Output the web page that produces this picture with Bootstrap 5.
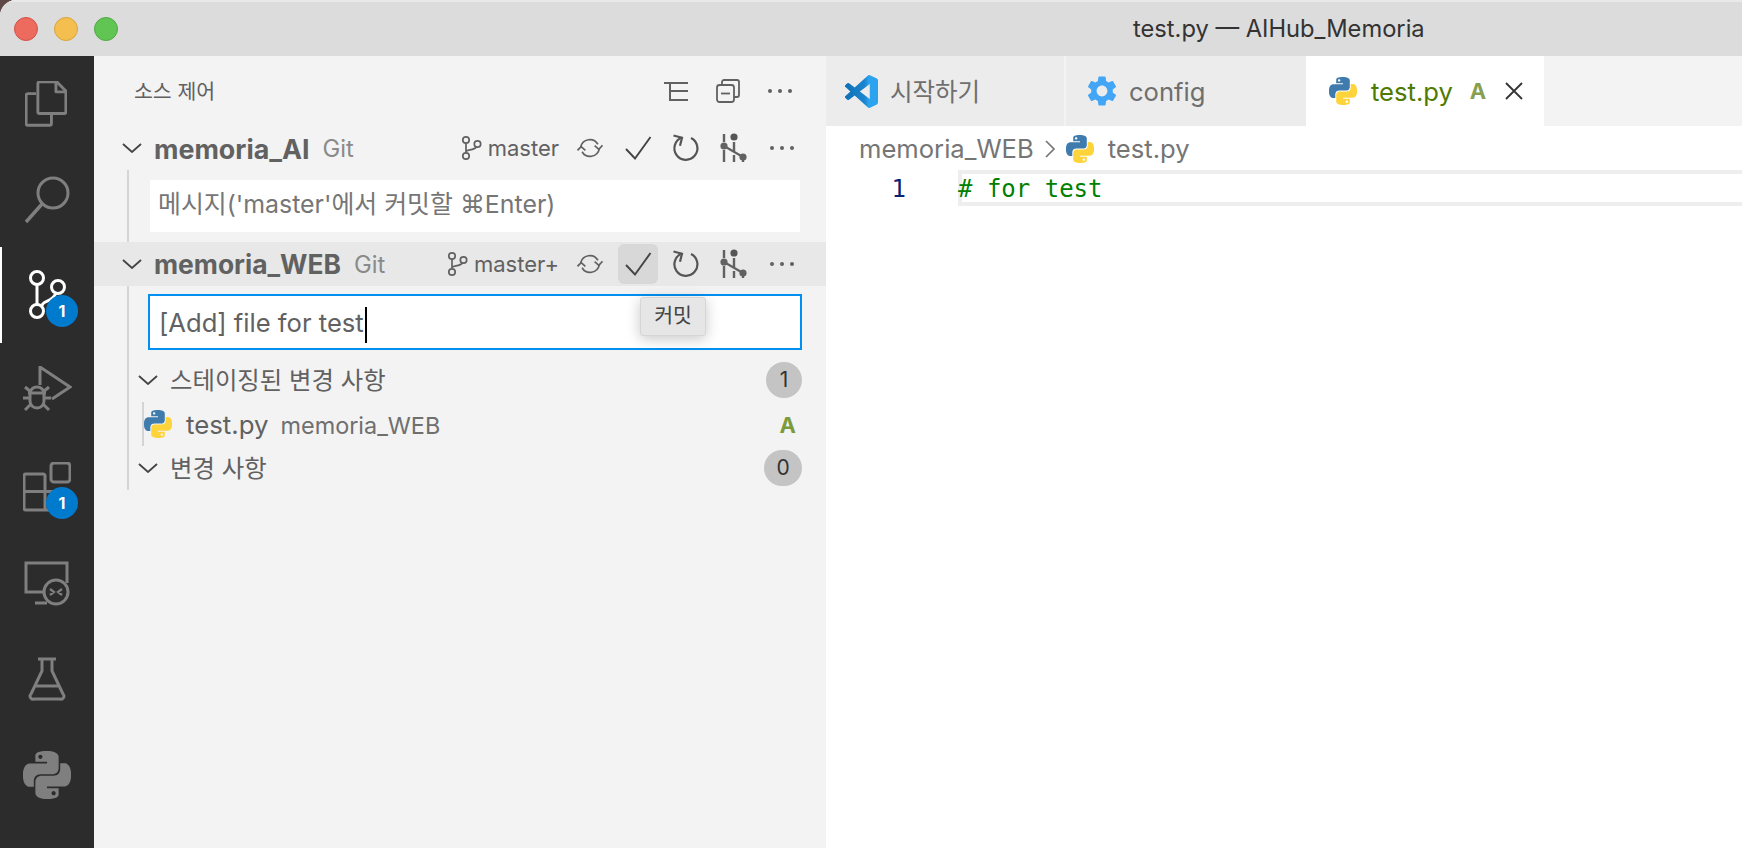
<!DOCTYPE html>
<html lang="ko">
<head>
<meta charset="utf-8">
<title>test.py — AIHub_Memoria</title>
<link href="https://cdn.jsdelivr.net/npm/bootstrap@5.3.0/dist/css/bootstrap.min.css" rel="stylesheet">
<style>
html,body{height:100%;margin:0;overflow:hidden;background:#5e4848;}
body{font-family:"Inter","Noto Sans CJK KR",sans-serif;color:#616161;}
.app-shell{width:1742px;height:848px;background:#fff;border-top-left-radius:16px;overflow:hidden;}
.title-bar{height:56px;background:#dcdcdc;border-top:2px solid #e9e9e9;}
.lights{padding-left:14px;gap:16px;}
.light{width:24px;height:24px;border-radius:50%;border:1px solid;}
.light-r{background:#ec6a5e;border-color:#d2544a;}
.light-y{background:#f4bf4f;border-color:#d9a33f;}
.light-g{background:#61c554;border-color:#50a945;}
.title-text{margin-left:1015px;font-size:23.7px;color:#333;line-height:1;}
.main-area{height:792px;}
.activity{width:94px;background:#2c2c2c;}
.act-item{height:96px;width:94px;border-left:2px solid transparent;}
.act-item svg{margin-left:-2px;}
.act-item.is-on{border-left-color:#fff;}
.act-search{height:95px;}
.act-files svg{margin-left:-4px;}
.act-badge{position:absolute;left:44px;top:48px;width:32px;height:32px;border-radius:50%;background:#007acc;color:#fff;font-size:16px;font-weight:700;}
.side-panel{width:732px;background:#f3f3f3;}
.side-head{height:70px;padding-left:40px;padding-right:20px;}
.side-title{font-size:20.5px;color:#616161;margin-top:2px;}
.head-cell{width:52px;height:40px;}
.repo-row{height:44px;padding-left:28px;padding-right:24px;}
.repo-row.is-hover{background:#e8e8e8;}
.repo-name{font-size:26.8px;font-weight:700;color:#616161;margin-left:12px;margin-top:2px;}
.name-web{font-size:26.4px;}
.repo-git{font-size:23.8px;color:#8a8a8a;margin-left:13px;margin-top:2px;}
.branch-txt{font-size:22px;color:#616161;margin-left:6px;}
.tool-cells{gap:8px;margin-left:11px;}
.tool-cell{width:40px;height:40px;border-radius:6px;}
.tool-cell.is-hover{background:#d8d8d8;}
.repo-body{margin-left:33px;border-left:2px solid #d4d4d4;}
.body-a{height:72px;padding-top:10px;}
.body-b{height:204px;padding-top:8px;}
.commit-a{margin-left:21px;width:650px;height:52px;padding:0 8px;font-size:24.9px;color:#767676;background:#fff;line-height:48px;}
.commit-b{margin-left:19px;width:654px;height:56px;border:2px solid #0090f1;padding:1px 9px 0;font-size:25.6px;color:#616161;background:#fff;line-height:52px;}
.text-caret{display:inline-block;width:2px;height:36px;background:#000;vertical-align:middle;margin-left:1px;}
.group-row{height:44px;padding-left:9px;padding-right:24px;}
.group-first{margin-top:8px;}
.group-txt{font-size:24.4px;color:#616161;margin-left:12px;}
.count-pill{min-width:36px;height:36px;border-radius:18px;background:#c4c4c4;color:#333;font-size:21px;}
.pill-wide{min-width:38px;}
.file-row{height:44px;margin-left:13px;border-left:2px solid #d4d4d4;padding-right:30px;}
.file-name{font-size:25.8px;color:#616161;margin-left:14px;margin-top:3px;}
.file-dir{font-size:23.4px;color:#6f6f6f;margin-left:12px;margin-top:3px;}
.file-flag{font-size:22px;font-weight:700;color:#7c9b3b;margin-top:3px;}
.tip-box{position:absolute;left:22px;top:53px;width:66px;height:39px;background:#e6e6e6;border:1px solid #d6d6d6;border-radius:3px;box-shadow:0 3px 14px rgba(0,0,0,.22);font-size:20.5px;color:#444;z-index:5;}
.editor-pane{width:916px;background:#fff;}
.tab-strip{height:70px;background:#f3f3f3;}
.ed-tab{width:238px;background:#ececec;padding-left:19px;font-size:25.6px;color:#6f6f6f;}
.tab-cfg{width:240px;margin-left:2px;padding-left:21px;}
.tab-on{background:#fff;width:238px;padding-left:23px;color:#4f7a00;}
.tab-text{margin-left:12px;margin-top:2px;}
.tab-ko{font-size:24.5px;}
.tab-on .tab-text{margin-left:14px;}
.tab-flag{font-size:22px;font-weight:700;color:#87a050;margin-left:17px;}
.tab-close{margin-left:19px;}
.crumb-row{height:44px;padding-left:33px;padding-top:2px;font-size:25.6px;color:#757575;}
.crumb-sep{margin-left:10px;margin-right:10px;}
.crumb-file{margin-left:14px;}
.code-row{height:36px;}
.line-no{width:132px;padding-right:52px;text-align:right;color:#0b216f;font-family:"DejaVu Sans Mono",monospace;font-size:24px;line-height:39px;}
.code-line{border:4px solid #eee;border-right:0;line-height:31px;height:36px;color:#008000;font-family:"DejaVu Sans Mono",monospace;font-size:24px;white-space:pre;}
.code-line span{margin-left:-4px;}
</style>
</head>
<body>
<svg class="d-none" xmlns="http://www.w3.org/2000/svg">
  <symbol id="py-gray" viewBox="0 0 24 24"><path fill="#7f7f7f" d="M14.25.18l.9.2.73.26.59.3.45.32.34.34.25.34.16.33.1.3.04.26.02.2-.01.13V8.5l-.05.63-.13.55-.21.46-.26.38-.3.31-.33.25-.35.19-.35.14-.33.1-.3.07-.26.04-.21.02H8.77l-.69.05-.59.14-.5.22-.41.27-.33.32-.27.35-.2.36-.15.37-.1.35-.07.32-.04.27-.02.21v3.06H3.17l-.21-.03-.28-.07-.32-.12-.35-.18-.36-.26-.36-.36-.35-.46-.32-.59-.28-.73-.21-.88-.14-1.05-.05-1.23.06-1.22.16-1.04.24-.87.32-.71.36-.57.4-.44.42-.33.42-.24.4-.16.36-.1.32-.05.24-.01h.16l.06.01h8.16v-.83H6.18l-.01-2.75-.02-.37.05-.34.11-.31.17-.28.25-.26.31-.23.38-.2.44-.18.51-.15.58-.12.64-.1.71-.06.77-.04.84-.02 1.27.05zm-6.3 1.98l-.23.33-.08.41.08.41.23.34.33.22.41.09.41-.09.33-.22.23-.34.08-.41-.08-.41-.23-.33-.33-.22-.41-.09-.41.09zm13.09 3.95l.28.06.32.12.35.18.36.27.36.35.35.47.32.59.28.73.21.88.14 1.04.05 1.23-.06 1.23-.16 1.04-.24.86-.32.71-.36.57-.4.45-.42.33-.42.24-.4.16-.36.09-.32.05-.24.02-.16-.01h-8.22v.82h5.84l.01 2.76.02.36-.05.34-.11.31-.17.29-.25.25-.31.24-.38.2-.44.17-.51.15-.58.13-.64.09-.71.07-.77.04-.84.01-1.27-.04-1.07-.14-.9-.2-.73-.25-.59-.3-.45-.33-.34-.34-.25-.34-.16-.33-.1-.3-.04-.25-.02-.2.01-.13v-5.34l.05-.64.13-.54.21-.46.26-.38.3-.32.33-.24.35-.2.35-.14.33-.1.3-.06.26-.04.21-.02.13-.01h5.84l.69-.05.59-.14.5-.21.41-.28.33-.32.27-.35.2-.36.15-.36.1-.35.07-.32.04-.28.02-.21V6.07h2.09l.14.01zm-6.47 14.25l-.23.33-.08.41.08.41.23.33.33.23.41.08.41-.08.33-.23.23-.33.08-.41-.08-.41-.23-.33-.33-.23-.41-.08-.41.08z"/></symbol>
  <symbol id="py-color" viewBox="0 0 24 24"><path fill="#3f7cad" d="M14.25.18l.9.2.73.26.59.3.45.32.34.34.25.34.16.33.1.3.04.26.02.2-.01.13V8.5l-.05.63-.13.55-.21.46-.26.38-.3.31-.33.25-.35.19-.35.14-.33.1-.3.07-.26.04-.21.02H8.77l-.69.05-.59.14-.5.22-.41.27-.33.32-.27.35-.2.36-.15.37-.1.35-.07.32-.04.27-.02.21v3.06H3.17l-.21-.03-.28-.07-.32-.12-.35-.18-.36-.26-.36-.36-.35-.46-.32-.59-.28-.73-.21-.88-.14-1.05-.05-1.23.06-1.22.16-1.04.24-.87.32-.71.36-.57.4-.44.42-.33.42-.24.4-.16.36-.1.32-.05.24-.01h.16l.06.01h8.16v-.83H6.18l-.01-2.75-.02-.37.05-.34.11-.31.17-.28.25-.26.31-.23.38-.2.44-.18.51-.15.58-.12.64-.1.71-.06.77-.04.84-.02 1.27.05zm-6.3 1.98l-.23.33-.08.41.08.41.23.34.33.22.41.09.41-.09.33-.22.23-.34.08-.41-.08-.41-.23-.33-.33-.22-.41-.09-.41.09z"/><path fill="#ffd43b" d="M21.04 6.11l.28.06.32.12.35.18.36.27.36.35.35.47.32.59.28.73.21.88.14 1.04.05 1.23-.06 1.23-.16 1.04-.24.86-.32.71-.36.57-.4.45-.42.33-.42.24-.4.16-.36.09-.32.05-.24.02-.16-.01h-8.22v.82h5.84l.01 2.76.02.36-.05.34-.11.31-.17.29-.25.25-.31.24-.38.2-.44.17-.51.15-.58.13-.64.09-.71.07-.77.04-.84.01-1.27-.04-1.07-.14-.9-.2-.73-.25-.59-.3-.45-.33-.34-.34-.25-.34-.16-.33-.1-.3-.04-.25-.02-.2.01-.13v-5.34l.05-.64.13-.54.21-.46.26-.38.3-.32.33-.24.35-.2.35-.14.33-.1.3-.06.26-.04.21-.02.13-.01h5.84l.69-.05.59-.14.5-.21.41-.28.33-.32.27-.35.2-.36.15-.36.1-.35.07-.32.04-.28.02-.21V6.07h2.09l.14.01zm-6.47 14.25l-.23.33-.08.41.08.41.23.33.33.23.41.08.41-.08.33-.23.23-.33.08-.41-.08-.41-.23-.33-.33-.23-.41-.08-.41.08z"/></symbol>
  <symbol id="chev" viewBox="0 0 20 10"><path d="M1 1l9 8 9-8" fill="none" stroke="#444" stroke-width="1.8"/></symbol>
  <symbol id="branch" viewBox="0 0 22 26" fill="none" stroke="#616161" stroke-width="1.7"><circle cx="6" cy="5" r="3.2"/><circle cx="6" cy="21" r="3.2"/><circle cx="17.5" cy="9" r="3.2"/><path d="M6 8.2v9.6M6 17c0-3 8-1 10.5-5.2"/></symbol>
  <symbol id="sync" viewBox="0 0 28 28" fill="none" stroke="#616161" stroke-width="1.8"><path d="M4 13A10 10 0 0 1 22.5 10M24 15A10 10 0 0 1 5.5 18"/><path d="M19 11.5l4.5 4 4-4.5M0.500 16.500l4-4 4.500 4"/></symbol>
  <symbol id="check" viewBox="0 0 28 26" fill="none" stroke="#444" stroke-width="1.9"><path d="M2 14l9 9.500L26.500 2"/></symbol>
  <symbol id="refresh" viewBox="0 0 28 28" fill="none" stroke="#555" stroke-width="2.2"><path d="M10 3.500A11.500 11.500 0 1 0 19 4"/><path d="M1.500 1.500l8.500 2.200-2 8"/></symbol>
  <symbol id="sliders" viewBox="-1 0 30 30" fill="none"><g stroke="#616161" stroke-width="2.400"><path d="M4 1v8M4 17v12M14 9v9M14 22v7M23 24v5"/><path d="M4 13l19 11" stroke-width="2.200"/></g><circle cx="4" cy="13" r="3.600" fill="#616161"/><circle cx="14" cy="4" r="3.600" fill="#555"/><circle cx="23" cy="24" r="3.600" fill="#616161"/></symbol>
  <symbol id="dots" viewBox="0 0 24 4" fill="#616161"><circle cx="2" cy="2" r="2"/><circle cx="12" cy="2" r="2"/><circle cx="22" cy="2" r="2"/></symbol>
</svg>

<div class="app-shell d-flex flex-column">
  <header class="title-bar d-flex align-items-center flex-shrink-0">
    <div class="lights d-flex">
      <span class="light light-r"></span><span class="light light-y"></span><span class="light light-g"></span>
    </div>
    <div class="title-text">test.py — AIHub_Memoria</div>
  </header>

  <div class="main-area d-flex">
    <nav class="activity flex-shrink-0">
      <div class="act-item act-files d-flex align-items-center justify-content-center">
        <svg width="42" height="47" viewBox="0 0 46 52" fill="none" stroke="#7f7f7f" stroke-width="3.200" stroke-linejoin="round"><path d="M12 14H3a2 2 0 0 0-2 2v31a2 2 0 0 0 2 2h24a2 2 0 0 0 2-2v-11"/><path d="M14 3a2 2 0 0 1 2-2h19l10 10v23a2 2 0 0 1-2 2H16a2 2 0 0 1-2-2z"/><path d="M34 1v11h11"/></svg>
      </div>
      <div class="act-item act-search d-flex align-items-center justify-content-center">
        <svg width="46" height="48" viewBox="0 0 46 48"><circle cx="29" cy="17" r="15" fill="none" stroke="#7f7f7f" stroke-width="3"/><path d="M18 28L2 46" stroke="#7f7f7f" stroke-width="3.400" fill="none"/></svg>
      </div>
      <div class="act-item is-on position-relative d-flex align-items-center justify-content-center">
        <svg width="38" height="50" viewBox="0 0 38 50" fill="none" stroke="#fff" stroke-width="3"><circle cx="9" cy="8" r="6.500"/><circle cx="30" cy="17" r="6.500"/><circle cx="9" cy="41" r="6.500"/><path d="M9 14.500v20"/><path d="M14 36c0-6 10-3 14-13"/></svg>
        <span class="act-badge d-flex align-items-center justify-content-center">1</span>
      </div>
      <div class="act-item d-flex align-items-center justify-content-center">
        <svg width="50" height="50" viewBox="0 0 50 50" fill="none" stroke="#7f7f7f" stroke-width="3"><path d="M18 19V1l30 20-18 12"/><path d="M6 27h18v0M8 27c0-3 3-6 7-6s7 3 7 6v8c0 4-3 7-7 7s-7-3-7-7zM8 32H1M22 32h7M9 26l-6-5M21 26l6-5M9 38l-6 6M21 38l6 6"/></svg>
      </div>
      <div class="act-item position-relative d-flex align-items-center justify-content-center">
        <svg width="48" height="50" viewBox="0 0 48 50" fill="none" stroke="#7f7f7f" stroke-width="3"><path d="M3 12h17a2 2 0 0 1 2 2v34H3a2 2 0 0 1-2-2V14a2 2 0 0 1 2-2zM1 29.500h39V48H22"/><rect x="28" y="1" width="19" height="19" rx="3"/></svg>
        <span class="act-badge d-flex align-items-center justify-content-center">1</span>
      </div>
      <div class="act-item d-flex align-items-center justify-content-center">
        <svg width="48" height="46" viewBox="0 0 48 46" fill="none" stroke="#7f7f7f" stroke-width="3"><path d="M23 32H3V3h41v20M12 43h12"/><circle cx="33" cy="32" r="12" fill="#2c2c2c"/><path d="M27 29l4 3-4 3M39 29l-4 3 4 3" stroke-width="2.200"/></svg>
      </div>
      <div class="act-item d-flex align-items-center justify-content-center">
        <svg width="38" height="44" viewBox="0 0 38 44" fill="none" stroke="#7f7f7f" stroke-width="3"><path d="M10 2h18M14 2v12L3 37a3 3 0 0 0 3 5h26a3 3 0 0 0 3-5L24 14V2M8 29h22"/></svg>
      </div>
      <div class="act-item d-flex align-items-center justify-content-center">
        <svg width="48" height="48"><use href="#py-gray"/></svg>
      </div>
    </nav>

    <aside class="side-panel flex-shrink-0">
      <div class="side-head d-flex align-items-center">
        <div class="side-title flex-grow-1">소스 제어</div>
        <div class="head-cell d-flex align-items-center justify-content-center">
          <svg width="24" height="21" viewBox="0 0 24 21" fill="none" stroke="#616161" stroke-width="2"><path d="M0 2h24M6 2v18M6 10h18M6 19h18"/></svg>
        </div>
        <div class="head-cell d-flex align-items-center justify-content-center">
          <svg width="24" height="24" viewBox="0 0 24 24" fill="none" stroke="#616161" stroke-width="1.800"><path d="M6 6V3a2 2 0 0 1 2-2h13a2 2 0 0 1 2 2v13a2 2 0 0 1-2 2h-3"/><rect x="1" y="6" width="17" height="17" rx="2.500"/><path d="M5 14.500h9"/></svg>
        </div>
        <div class="head-cell d-flex align-items-center justify-content-center">
          <svg width="24" height="4"><use href="#dots"/></svg>
        </div>
      </div>

      <div class="repo-row d-flex align-items-center">
        <svg width="20" height="10"><use href="#chev"/></svg>
        <span class="repo-name">memoria_AI</span><span class="repo-git">Git</span>
        <div class="d-flex align-items-center ms-auto">
          <svg width="22" height="26"><use href="#branch"/></svg>
          <span class="branch-txt">master</span>
          <div class="tool-cells d-flex">
            <div class="tool-cell d-flex align-items-center justify-content-center"><svg width="26" height="26"><use href="#sync"/></svg></div>
            <div class="tool-cell d-flex align-items-center justify-content-center"><svg width="28" height="26"><use href="#check"/></svg></div>
            <div class="tool-cell d-flex align-items-center justify-content-center"><svg width="28" height="28"><use href="#refresh"/></svg></div>
            <div class="tool-cell d-flex align-items-center justify-content-center"><svg width="30" height="30"><use href="#sliders"/></svg></div>
            <div class="tool-cell d-flex align-items-center justify-content-center"><svg width="24" height="4"><use href="#dots"/></svg></div>
          </div>
        </div>
      </div>
      <div class="repo-body body-a">
        <div class="commit-a">메시지('master'에서 커밋할 ⌘Enter)</div>
      </div>

      <div class="repo-row is-hover d-flex align-items-center">
        <svg width="20" height="10"><use href="#chev"/></svg>
        <span class="repo-name name-web">memoria_WEB</span><span class="repo-git">Git</span>
        <div class="d-flex align-items-center ms-auto">
          <svg width="22" height="26"><use href="#branch"/></svg>
          <span class="branch-txt">master+</span>
          <div class="tool-cells d-flex">
            <div class="tool-cell d-flex align-items-center justify-content-center"><svg width="26" height="26"><use href="#sync"/></svg></div>
            <div class="tool-cell is-hover position-relative d-flex align-items-center justify-content-center"><svg width="28" height="26"><use href="#check"/></svg>
              <div class="tip-box d-flex align-items-center justify-content-center">커밋</div>
            </div>
            <div class="tool-cell d-flex align-items-center justify-content-center"><svg width="28" height="28"><use href="#refresh"/></svg></div>
            <div class="tool-cell d-flex align-items-center justify-content-center"><svg width="30" height="30"><use href="#sliders"/></svg></div>
            <div class="tool-cell d-flex align-items-center justify-content-center"><svg width="24" height="4"><use href="#dots"/></svg></div>
          </div>
        </div>
      </div>
      <div class="repo-body body-b">
        <div class="commit-b">[Add] file for test<span class="text-caret"></span></div>
        <div class="group-row group-first d-flex align-items-center">
          <svg width="20" height="10"><use href="#chev"/></svg>
          <span class="group-txt">스테이징된 변경 사항</span>
          <span class="count-pill ms-auto d-flex align-items-center justify-content-center">1</span>
        </div>
        <div class="file-row d-flex align-items-center">
          <svg width="28" height="28"><use href="#py-color"/></svg>
          <span class="file-name">test.py</span><span class="file-dir">memoria_WEB</span>
          <span class="file-flag ms-auto">A</span>
        </div>
        <div class="group-row d-flex align-items-center">
          <svg width="20" height="10"><use href="#chev"/></svg>
          <span class="group-txt">변경 사항</span>
          <span class="count-pill pill-wide ms-auto d-flex align-items-center justify-content-center">0</span>
        </div>
      </div>
    </aside>

    <main class="editor-pane flex-grow-1">
      <div class="tab-strip d-flex">
        <div class="ed-tab d-flex align-items-center">
          <svg width="33" height="33" viewBox="0 0 24 24"><defs><linearGradient id="vs-grad" x1="0" x2="1" y1="0" y2="0"><stop offset="0" stop-color="#0f6fb5"/><stop offset=".6" stop-color="#1a86d0"/><stop offset=".72" stop-color="#2ba3ee"/><stop offset="1" stop-color="#2ba3ee"/></linearGradient></defs><path fill="url(#vs-grad)" d="M23.15 2.587L18.21.21a1.494 1.494 0 0 0-1.705.29l-9.46 8.63-4.12-3.128a.999.999 0 0 0-1.276.057L.327 7.261A1 1 0 0 0 .326 8.74L3.899 12 .326 15.26a1 1 0 0 0 .001 1.479L1.65 17.94a.999.999 0 0 0 1.276.057l4.12-3.128 9.46 8.63a1.492 1.492 0 0 0 1.704.29l4.942-2.377A1.5 1.5 0 0 0 24 20.06V3.939a1.5 1.5 0 0 0-.85-1.352zm-5.146 14.861L10.826 12l7.178-5.448v10.896z"/></svg>
          <span class="tab-text tab-ko">시작하기</span>
        </div>
        <div class="ed-tab tab-cfg d-flex align-items-center">
          <svg width="30" height="30" viewBox="2 2 20 20"><path fill="#42a5f5" d="M19.14 12.94c.04-.3.06-.61.06-.94 0-.32-.02-.64-.07-.94l2.03-1.58a.49.49 0 0 0 .12-.61l-1.92-3.32a.488.488 0 0 0-.59-.22l-2.39.96c-.5-.38-1.03-.7-1.62-.94l-.36-2.54a.484.484 0 0 0-.48-.41h-3.84c-.24 0-.43.17-.47.41l-.36 2.54c-.59.24-1.13.57-1.62.94l-2.39-.96c-.22-.08-.47 0-.59.22L2.74 8.87c-.12.21-.08.47.12.61l2.03 1.58c-.05.3-.09.63-.09.94s.02.64.07.94l-2.03 1.58a.49.49 0 0 0-.12.61l1.92 3.32c.12.22.37.29.59.22l2.39-.96c.5.38 1.03.7 1.62.94l.36 2.54c.05.24.24.41.48.41h3.84c.24 0 .44-.17.47-.41l.36-2.54c.59-.24 1.13-.56 1.62-.94l2.39.96c.22.08.47 0 .59-.22l1.92-3.32c.12-.22.07-.47-.12-.61l-2.01-1.58zM12 15.6c-1.98 0-3.6-1.62-3.6-3.6s1.62-3.6 3.6-3.6 3.6 1.62 3.6 3.6-1.62 3.6-3.6 3.6z"/></svg>
          <span class="tab-text">config</span>
        </div>
        <div class="ed-tab tab-on d-flex align-items-center">
          <svg width="28" height="28"><use href="#py-color"/></svg>
          <span class="tab-text">test.py</span>
          <span class="tab-flag">A</span>
          <svg class="tab-close" width="18" height="18" viewBox="0 0 18 18"><path d="M1 1l16 16M17 1L1 17" stroke="#333" stroke-width="1.800" fill="none"/></svg>
        </div>
      </div>
      <div class="crumb-row d-flex align-items-center">
        <span>memoria_WEB</span>
        <svg class="crumb-sep" width="12" height="20" viewBox="0 0 12 20"><path d="M2 2l8 8-8 8" fill="none" stroke="#757575" stroke-width="1.700"/></svg>
        <svg width="28" height="28"><use href="#py-color"/></svg>
        <span class="crumb-file">test.py</span>
      </div>
      <div class="code-row d-flex">
        <div class="line-no flex-shrink-0">1</div>
        <div class="code-line flex-grow-1"><span># for test</span></div>
      </div>
    </main>
  </div>
</div>
<script src="https://cdn.jsdelivr.net/npm/bootstrap@5.3.0/dist/js/bootstrap.bundle.min.js"></script>
</body>
</html>
